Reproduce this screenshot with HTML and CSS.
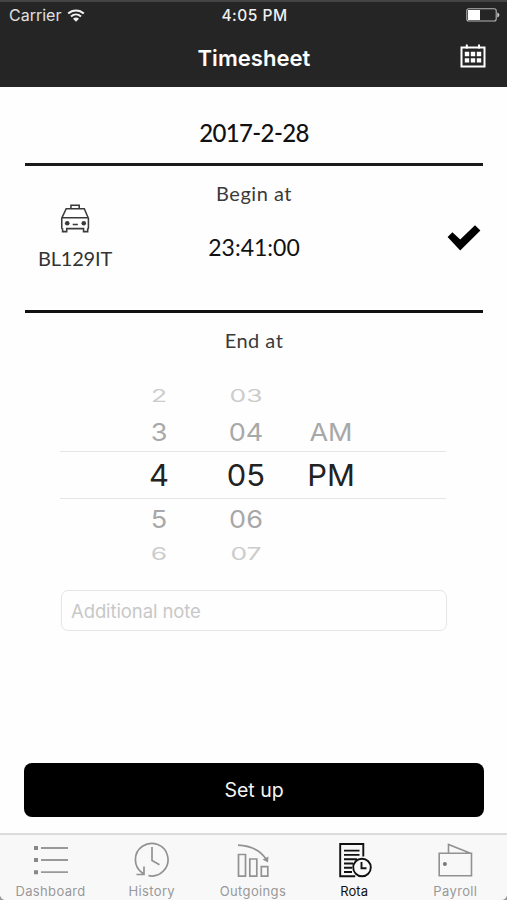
FILE: index.html
```html
<!DOCTYPE html>
<html lang="en">
<head>
<meta charset="utf-8">
<title>Timesheet</title>
<link rel="stylesheet" href="styles.css">
</head>
<body>
<div class="screen">
  <header class="top">
    <div class="status">
      <div class="carrier"><span>Carrier</span>
        <svg width="18" height="13" viewBox="0 0 18 13" fill="none" stroke="#f2f2f2" stroke-width="2.1"><path d="M1.2 4.6C5.6.4 12.4.4 16.8 4.6M4 7.5c2.9-2.6 7.1-2.6 10 0"/><path d="M6 9.8c1.7-1.6 4.3-1.6 6 0l-3 3z" fill="#f2f2f2" stroke="none"/></svg>
      </div>
      <div class="clock"><span>4:05 PM</span></div>
      <div class="battery">
        <svg width="34" height="14" viewBox="0 0 34 14"><rect x=".8" y=".8" width="29.4" height="12.2" rx="2" fill="none" stroke="#b5b5b5" stroke-width="1.1"/><rect x="2" y="2" width="12" height="10" fill="#fff"/><path d="M31.3 4.5c2.7.8 2.7 4.2 0 5z" fill="#ccc"/></svg>
      </div>
    </div>
    <div class="nav">
      <h1><span>Timesheet</span></h1>
      <svg class="calendar" width="26" height="24" viewBox="0 0 26 24"><path d="M1.500 3.500h23v18.900h-23z" fill="none" stroke="#fff" stroke-width="2"/><path d="M6.800.6v4M19 .6v4" stroke="#fff" stroke-width="2"/><path d="M4.800 7.800h4.400v4.400H4.800zM10.800 7.800h4.400v4.400h-4.400zM16.800 7.800h4.400v4.400h-4.400zM4.800 14.200h4.400v4.400H4.800zM10.800 14.200h4.400v4.400h-4.400zM16.800 14.200h4.400v4.400h-4.400z" fill="#fff"/></svg>
    </div>
  </header>

  <main>
    <div class="date"><span>2017-2-28</span></div>
    <section class="begin">
      <div class="vehicle">
        <svg width="31" height="29" viewBox="0 0 30 28" fill="none" stroke="#3a3a3a" stroke-width="1.500"><path d="M10.600 4.500V1.200h8v3.300M6 4.600h17.500l4 9.200v9.500c0 .7-.3 1-.7 1v2.400h-4v-2.900H6.500v2.900h-4v-2.400c-.5 0-.8-.3-.8-1v-9.500zM1.700 13.200h26"/><path d="M12.300 19.800h5"/><g fill="#3a3a3a" stroke="none"><circle cx="7" cy="18.600" r="2.200"/><circle cx="23" cy="18.600" r="2.200"/></g></svg>
        <span>BL129IT</span>
      </div>
      <div class="start">
        <span class="caption">Begin at</span>
        <span class="time">23:41:00</span>
      </div>
      <svg class="check" width="34" height="26" viewBox="0 0 34 26"><path d="M.6 12 5.400 7.300l7.800 7.200L28 .3l5.400 5.300L13.200 25.500z"/></svg>
    </section>
    <div class="end"><span class="caption">End at</span></div>

    <div class="picker">
      <div class="row far"><span>2</span><span>03</span><span></span></div>
      <div class="row near"><span>3</span><span>04</span><span>AM</span></div>
      <div class="row current"><span>4</span><span>05</span><span>PM</span></div>
      <div class="row near"><span>5</span><span>06</span><span></span></div>
      <div class="row far"><span>6</span><span>07</span><span></span></div>
    </div>

    <div class="note"><span>Additional note</span></div>
    <div class="submit"><span>Set up</span></div>
  </main>

  <nav class="tabs">
    <div class="tab">
      <svg width="36" height="36" viewBox="0 0 36 36"><path d="M8 6h27M8 18h27M8 30.200h27" stroke="#999" stroke-width="1.800"/><path d="M1 4h4v4H1zM1 16h4v4H1zM1 28.200h4v4H1z" fill="#888"/></svg>
      <span class="wide">Dashboard</span>
    </div>
    <div class="tab">
      <svg width="36" height="36" viewBox="0 0 36 36" fill="none" stroke="#929292" stroke-width="1.700"><path d="M14.500 33.700A16.300 16.300 0 1 0 9 31.500M2.500 32.500H10v-8M18 5v13.500l7.500 4.200"/></svg>
      <span class="wide">History</span>
    </div>
    <div class="tab">
      <svg width="36" height="36" viewBox="0 0 36 36" fill="none" stroke="#929292" stroke-width="1.700"><path d="M3.500 12.500h7v21.700h-7zM14.800 17h7v17.200h-7zM26.300 24.700h6.500v9.500h-6.500zM3 3.200c12.500.5 21.500 4.300 28 13.800"/><path d="m27.500 17.500 6-3-.5 6z" fill="#929292" stroke="none"/></svg>
      <span class="wide">Outgoings</span>
    </div>
    <div class="tab active">
      <svg width="36" height="36" viewBox="0 0 36 36" fill="none" stroke="#111" stroke-width="1.900"><path d="M27.300 14.500V2H4.200v32.200h15M8 8.600h15.500M8 12.900h15.500M8 17.200h13M8 21.500h9M8 25.800h8M8 30h8"/><circle cx="26" cy="25.500" r="8.800"/><path d="M25.500 20v6.200h5"/></svg>
      <span>Rota</span>
    </div>
    <div class="tab">
      <svg width="36" height="36" viewBox="0 0 36 36" fill="none" stroke="#929292" stroke-width="1.600"><path d="M2.200 11.300h32.300v22.500H2.200zM11.500 11.300V2.500l22 8.800"/><circle cx="7.900" cy="22" r="2" fill="#777" stroke="none"/></svg>
      <span class="wide">Payroll</span>
    </div>
  </nav>
</div>
</body>
</html>
```
FILE: styles.css
```css
* { box-sizing: border-box; }
body { margin: 0; font-family: Inter, sans-serif; background: #999; }
.screen {
  width: 507px; height: 900px; overflow: hidden;
  display: flex; flex-direction: column; background: #fefefe;
  border-radius: 0 0 6px 6px;
}
.top { height: 87px; background: #252525; border-top: 2px solid #444; color: #fff; }
.status { height: 26px; display: grid; grid-template-columns: 1fr 1fr 1fr; align-items: center; padding: 0 7px 0 9px; }
.carrier { display: flex; align-items: center; gap: 6px; font-size: 16px; letter-spacing: 0; color: #e0e0e0; }
.clock { text-align: center; font-size: 15.500px; font-weight: 500; letter-spacing: .5px; color: #f0f0f0; }
.battery { display: flex; justify-content: flex-end; }
.nav { height: 59px; display: grid; grid-template-columns: 1fr auto 1fr; align-items: center; padding-right: 21px; padding-left: 22px; }
.nav h1 { grid-column: 2; margin: 0; font-size: 22px; font-weight: 600; letter-spacing: .05px; }
.calendar { justify-self: end; margin-top: -4px; }

main { flex: 1; padding: 0 23px 0 24px; }
.date {
  height: 79px; margin: 0 1px; border-bottom: 3px solid #1a1a1a;
  display: flex; justify-content: center; padding-top: 32px;
  font: 500 24px/28px Lato, sans-serif; letter-spacing: -.65px; color: #111;
}
.begin {
  height: 147px; margin: 0 1px; border-bottom: 3px solid #111;
  display: grid; grid-template-columns: 100px 1fr 100px;
}
.vehicle { display: flex; flex-direction: column; align-items: center; padding-top: 38px; font: 20px/24px Lato, sans-serif; letter-spacing: -.2px; color: #333; }
.vehicle span { margin-top: 13px; }
.start { display: flex; flex-direction: column; align-items: center; padding-top: 15px; }
.caption { font: 20px/24px Lato, sans-serif; letter-spacing: .5px; color: #3a3a3a; }
.time { margin-top: 28px; font: 23px/28px Lato, sans-serif; color: #111; }
.check { justify-self: end; margin: 59px 2px 0 0; }
.end { height: 67px; padding-top: 15px; display: flex; justify-content: center; }

.picker { width: 386px; margin: 0 0 0 36px; }
.row { display: grid; grid-template-columns: 78px 96px 74px; padding-left: 60px; align-items: center; text-align: center; }
.far { height: 32px; font-size: 24px; color: #ccc; }
.far span { transform: scale(1.1, .7); }
.near { height: 39px; font-size: 26px; color: #a8a8a8; }
.near span { transform: scale(1.04, .95); }
.current { height: 48px; font-size: 30px; color: #222; border: solid #e6e6e6; border-width: 1.500px 0; }
.current span { transform: scaleX(1.03); }

.note {
  height: 41px; width: 386px; margin: 20px 0 0 37px; padding-left: 9px;
  border: 1.500px solid #e5e5e5; border-radius: 7px;
  display: flex; align-items: center; font-size: 18.500px; letter-spacing: -.1px; color: #c8c8c8;
}
.submit {
  height: 54px; margin-top: 132px; background: #000; border-radius: 8px;
  display: flex; align-items: center; justify-content: center; color: #f4f4f4; font-size: 19.500px;
}
.tabs { height: 67px; border-top: 2px solid #dcdcdc; background: #f8f8f8; display: grid; grid-template-columns: repeat(5, 101.200px); }
.tab { display: flex; flex-direction: column; align-items: center; padding-top: 7px; font-size: 13px; line-height: 16px; color: #999; }
.tab span { margin-top: 5px; }
.tab .wide { letter-spacing: .35px; }
.active { color: #111; }
```
